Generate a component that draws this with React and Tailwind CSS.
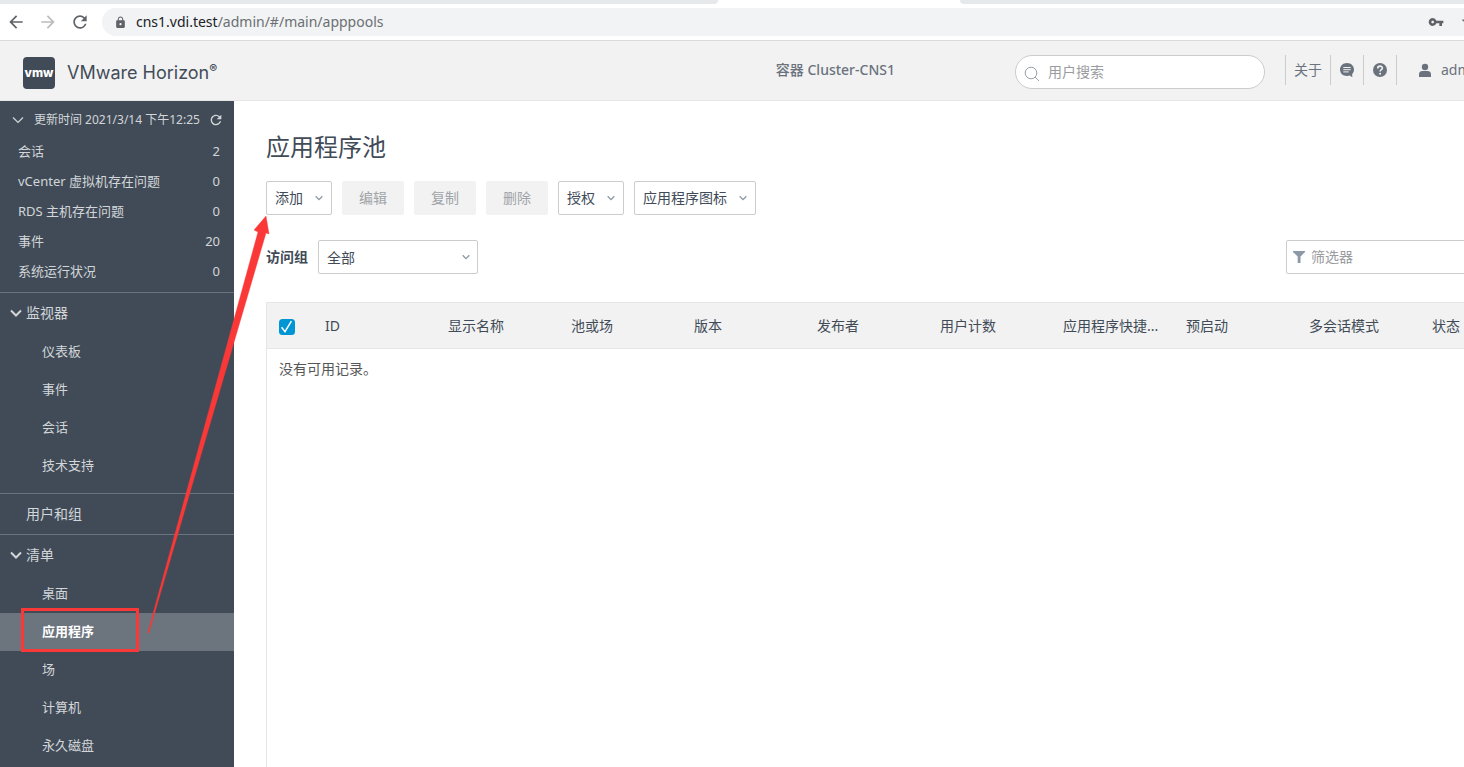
import React from 'react';
import { MdArrowBack, MdArrowForward, MdRefresh, MdLock, MdVpnKey, MdStarBorder } from 'react-icons/md';

const stats = [
  { label: '会话', value: 2 },
  { label: 'vCenter 虚拟机存在问题', value: 0 },
  { label: 'RDS 主机存在问题', value: 0 },
  { label: '事件', value: 20 },
  { label: '系统运行状况', value: 0 },
];

const monitorItems = ['仪表板', '事件', '会话', '技术支持'];
const inventoryItems = ['桌面', '应用程序', '场', '计算机', '永久磁盘'];

const columns = ['ID', '显示名称', '池或场', '版本', '发布者', '用户计数', '应用程序快捷...', '预启动', '多会话模式', '状态'];

const Chevron = ({ className, strokeWidth = 1.5 }) => (
  <svg className={className} viewBox="0 0 12 12" fill="none" stroke="currentColor" strokeWidth={strokeWidth}>
    <path d="M1 3.5 L6 8.5 L11 3.5" />
  </svg>
);

const BrowserBar = () => (
  <div className="bg-white border-b border-[#d9dbdc]">
    <div className="flex h-1">
      <div className="w-[718px] bg-[#e6e9ec] rounded-br-md"></div>
      <div className="w-[242px]"></div>
      <div className="flex-1 bg-[#e6e9ec] rounded-bl-md"></div>
    </div>
    <div className="flex items-center h-9 pl-[6px] text-[#5f6368]">
      <button aria-label="后退" className="w-8 flex-none"><MdArrowBack size={20} /></button>
      <button aria-label="前进" className="w-8 flex-none text-[#babcbe]"><MdArrowForward size={20} /></button>
      <button aria-label="刷新" className="w-8 flex-none"><MdRefresh size={20} /></button>
      <div className="flex flex-1 items-center h-7 bg-[#f1f3f4] rounded-l-full pl-3">
        <MdLock size={13} />
        <span className="ml-[9px] text-sm leading-5 text-[#6b6f73]">
          <span className="text-[#202124]">cns1.vdi.test</span>/admin/#/main/apppools
        </span>
        <MdVpnKey size={16} className="ml-auto" />
        <MdStarBorder size={20} className="ml-4 mr-[94px]" />
      </div>
    </div>
  </div>
);

const Header = () => (
  <header className="flex items-center h-[60px] pl-[23px] bg-[#f2f2f2] border-b border-[#e6e6e6] text-[#6a727d]">
    <div className="flex items-center justify-center w-8 h-8 mt-1 rounded-sm bg-[#414b57] font-['Inter',sans-serif] text-xs font-extrabold text-white">
      vmw
    </div>
    <h1 className="ml-3 mt-1 font-['Inter',sans-serif] text-lg leading-6 text-[#434c58]">
      VMware Horizon<sup className="text-xs font-semibold">®</sup>
    </h1>
    <div className="ml-auto mr-[120px] pb-[2px] text-sm font-medium">容器 Cluster-CNS1</div>

    <label className="flex items-center w-[250px] h-[34px] mt-[2px] px-2 bg-white border border-[#ccc] rounded-full">
      <svg className="w-4 h-4 flex-none mt-1" viewBox="0 0 16 16" fill="none" stroke="#9aa0a8">
        <circle cx="7" cy="7" r="5.8" />
        <path d="M11 11 L15 15" />
      </svg>
      <input type="text" aria-label="用户搜索" placeholder="用户搜索" className="ml-2 w-full min-w-0 bg-transparent outline-none text-sm leading-5 placeholder-[#9a9ca0]" />
    </label>

    <div className="flex items-center h-[30px] mb-[2px] ml-5 divide-x divide-[#ccc] border-x border-[#ccc]">
      <a href="#about" className="flex items-center h-full px-2 text-sm">关于</a>
      <button aria-label="反馈" className="flex items-center h-full px-2">
        <svg className="w-4 h-4" viewBox="0 0 16 16">
          <path d="M8 1 C3.8 1 1 3.9 1 7.6 C1 11.4 3.8 14 8 14 C9 14 10 13.8 10.8 13.5 L13.3 15.3 L13.2 12 C14.4 10.9 15 9.4 15 7.6 C15 3.9 12.2 1 8 1 Z" fill="#6a727d" />
          <path d="M4.3 5.5 H11.7 M4.3 7.7 H11.7 M4.3 9.9 H9.7" stroke="#f2f2f2" strokeWidth="1" />
        </svg>
      </button>
      <button aria-label="帮助" className="flex items-center h-full px-2">
        <svg className="w-4 h-4" viewBox="0 0 16 16">
          <circle cx="8" cy="8" r="7" fill="#6a727d" />
          <path d="M5.7 6.4 C5.7 3.4 10.4 3.5 10.4 6.1 C10.4 7.8 8.1 7.6 8.1 9.5" fill="none" stroke="#f2f2f2" strokeWidth="1.6" />
          <circle cx="8.1" cy="11.8" r="1" fill="#f2f2f2" />
        </svg>
      </button>
    </div>

    <button className="flex items-center w-[157px] mb-[2px] ml-5 text-sm">
      <svg className="w-4 h-4 mr-2" viewBox="0 0 16 16" fill="#6a727d">
        <circle cx="8" cy="5" r="3.2" />
        <path d="M2 15 V12.2 C2 10.2 3.6 9 5.4 9 H10.6 C12.4 9 14 10.2 14 12.2 V15 Z" />
      </svg>
      admin
    </button>
  </header>
);

const NavGroup = ({ title, items, active }) => (
  <section className="border-t border-[#6b737e] pb-2">
    <button className="flex items-center w-full h-10 pl-[10px] text-sm">
      <Chevron className="w-3 h-3 mr-1" strokeWidth={2} />
      {title}
    </button>
    <ul>
      {items.map((item) => (
        <li key={item}>
          <a
            href="#"
            className={
              item === active
                ? 'flex items-center h-[38px] pl-[42px] text-[13px] font-bold text-white bg-[#6c747e]'
                : 'flex items-center h-[38px] pl-[42px] text-[13px]'
            }
          >
            {item}
          </a>
        </li>
      ))}
    </ul>
  </section>
);

const Sidebar = () => (
  <aside className="w-[234px] flex-none bg-[#414b57] text-[#d2d6d9]">
    <div className="pt-px pb-[5px]">
      <div className="flex items-center h-[35px] pl-3 pr-[10px] text-xs">
        <Chevron className="w-3 h-3 mr-[10px]" strokeWidth={1.2} />
        更新时间 2021/3/14 下午12:25
        <button aria-label="刷新" className="ml-auto"><MdRefresh size={16} /></button>
      </div>
      {stats.map((stat) => (
        <a key={stat.label} href="#" className="flex items-center justify-between h-[30px] pl-[18px] pr-[14px] text-[13px]">
          <span>{stat.label}</span>
          <span>{stat.value}</span>
        </a>
      ))}
    </div>
    <NavGroup title="监视器" items={monitorItems} />
    <a href="#" className="flex items-center h-[41px] pl-[26px] text-sm border-t border-[#6b737e]">用户和组</a>
    <NavGroup title="清单" items={inventoryItems} active="应用程序" />
  </aside>
);

const DropdownButton = ({ children }) => (
  <button className="flex items-center h-[34px] px-2 border border-[#ccc] rounded-xs">
    {children}
    <Chevron className="w-2 h-2 ml-3 text-[#8c98a5]" strokeWidth={2} />
  </button>
);

const DisabledButton = ({ children }) => (
  <button disabled className="h-[34px] w-[62px] rounded-xs bg-[#f2f2f2] text-[#a0a3a8]">{children}</button>
);

const AppPools = () => (
  <main className="flex flex-col flex-1 pl-8 pr-8 pt-7 text-sm text-[#414b57]">
    <h2 className="text-2xl leading-9">应用程序池</h2>

    <div className="flex gap-[10px] mt-4">
      <DropdownButton>添加</DropdownButton>
      <DisabledButton>编辑</DisabledButton>
      <DisabledButton>复制</DisabledButton>
      <DisabledButton>删除</DisabledButton>
      <DropdownButton>授权</DropdownButton>
      <DropdownButton>应用程序图标</DropdownButton>
    </div>

    <div className="flex items-center mt-[25px]">
      <label htmlFor="access-group" className="font-bold">访问组</label>
      <div className="relative ml-[10px]">
        <select id="access-group" className="w-40 h-[34px] pl-2 pt-[2px] appearance-none bg-white border border-[#ccc] rounded-xs">
          <option>全部</option>
        </select>
        <Chevron className="absolute w-2 h-2 right-2 top-[13px] text-[#8c98a5] pointer-events-none" strokeWidth={2} />
      </div>
      <label className="flex items-center w-64 h-[34px] ml-auto pl-[6px] border border-[#ccc] rounded-xs">
        <svg className="w-3 h-3 flex-none" viewBox="0 0 12 12" fill="#8c98a5">
          <path d="M0 0 H12 V1 L7.5 5.5 V12 H4.7 V5.5 L0 1 Z" />
        </svg>
        <input type="text" aria-label="筛选器" placeholder="筛选器" className="ml-[6px] w-full min-w-0 outline-none leading-5 placeholder-[#9a9ca0]" />
      </label>
    </div>

    <div className="flex-1 mt-7 border-t border-l border-[#e6e6e6]">
      <table className="w-full table-fixed text-left">
        <thead>
          <tr className="h-[45px] bg-[#f2f2f2] border-b border-[#e6e6e6]">
            <th className="w-[45px] pl-3">
              <input type="checkbox" aria-label="全选" defaultChecked className="peer sr-only" />
              <svg className="w-4 h-4 mt-1" viewBox="0 0 16 16" fill="none">
                <rect width="16" height="16" rx="3.5" fill="#0095d3" />
                <path d="M2.6 8.3 L6 12.6 L12.4 2.2" stroke="#fff" strokeWidth="1.5" />
              </svg>
            </th>
            {columns.map((col) => (
              <th key={col} className="pl-[13px] pt-[2px] font-normal whitespace-nowrap">{col}</th>
            ))}
          </tr>
        </thead>
        <tbody>
          <tr>
            <td colSpan={11} className="h-[42px] pl-3 text-[#565656]">没有可用记录。</td>
          </tr>
        </tbody>
      </table>
    </div>
  </main>
);

const Annotations = () => (
  <>
    <div className="absolute left-[21px] top-[608px] w-[118px] h-11 border-3 border-[#fb3838] pointer-events-none"></div>
    <svg className="absolute left-[140px] top-[210px] w-[140px] h-[430px] pointer-events-none" viewBox="140 210 140 430">
      <polygon points="147.7,633 148.8,633 266,233 269,234 266,216 254,230 258,232" fill="#fb3838" stroke="#fb3838" strokeWidth="0.4" />
    </svg>
  </>
);

const App = () => {
  return (
    <div className="h-screen overflow-hidden bg-white font-['Noto_Sans','Noto_Sans_CJK_SC',sans-serif]">
      <div className="relative flex flex-col min-h-screen min-w-[1574px]">
        <BrowserBar />
        <Header />
        <div className="flex flex-1">
          <Sidebar />
          <AppPools />
        </div>
        <Annotations />
      </div>
    </div>
  );
};

export default App;
